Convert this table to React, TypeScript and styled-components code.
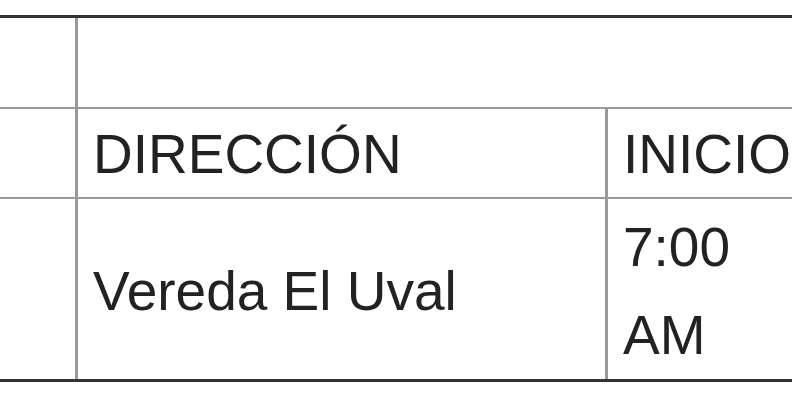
import styled, { createGlobalStyle } from 'styled-components';

const GlobalStyle = createGlobalStyle`
  html, body {
    margin: 0;
    padding: 0;
    background: #ffffff;
    overflow: hidden;
  }
`;

function App() {
  return (
    <>
      <GlobalStyle />
      <Page>
        <Table>
          <colgroup>
            <col style={{ width: 75 }} />
            <col style={{ width: 530 }} />
            <col style={{ width: 300 }} />
          </colgroup>
          <tbody>
            <Row>
              <Cell $first $height={89} />
              <Cell colSpan={2} $height={89} />
            </Row>
            <Row>
              <Cell $first $height={88} />
              <HeadCell>DIRECCIÓN</HeadCell>
              <HeadCell>INICIO</HeadCell>
            </Row>
            <Row>
              <Cell $first $height={180} $last />
              <BodyCell $last>Vereda El Uval</BodyCell>
              <BodyCell $last>
                7:00
                <br />
                AM
              </BodyCell>
            </Row>
          </tbody>
        </Table>
      </Page>
    </>
  );
}

const Page = styled.div`
  padding-top: 15px;
  width: 792px;
  overflow: hidden;
`;

const Table = styled.table`
  width: 905px;
  table-layout: fixed;
  border-collapse: separate;
  border-spacing: 0;
  border-top: 3px solid #333333;
  border-bottom: 3px solid #333333;
  font-family: 'Liberation Sans', Arial, sans-serif;
  font-size: 55px;
  color: #222222;
`;

const Row = styled.tr``;

const Cell = styled.td<{ $first?: boolean; $last?: boolean; $height?: number }>`
  box-sizing: content-box;
  padding: 1px 15px;
  height: ${(p) => (p.$height ? `${p.$height - 2}px` : 'auto')};
  line-height: 88px;
  vertical-align: middle;
  white-space: nowrap;
  overflow: hidden;
  border-bottom: ${(p) => (p.$last ? 'none' : '2px solid #999999')};
  border-left: ${(p) => (p.$first ? 'none' : '3px solid #999999')};
`;

const HeadCell = styled(Cell)`
  padding: 3px 15px 0;
  height: 85px;
  line-height: 85px;
  text-transform: uppercase;
`;

const BodyCell = styled(Cell)`
  padding: 4px 15px 0;
  height: 176px;
  line-height: 88px;
`;

export default App;
